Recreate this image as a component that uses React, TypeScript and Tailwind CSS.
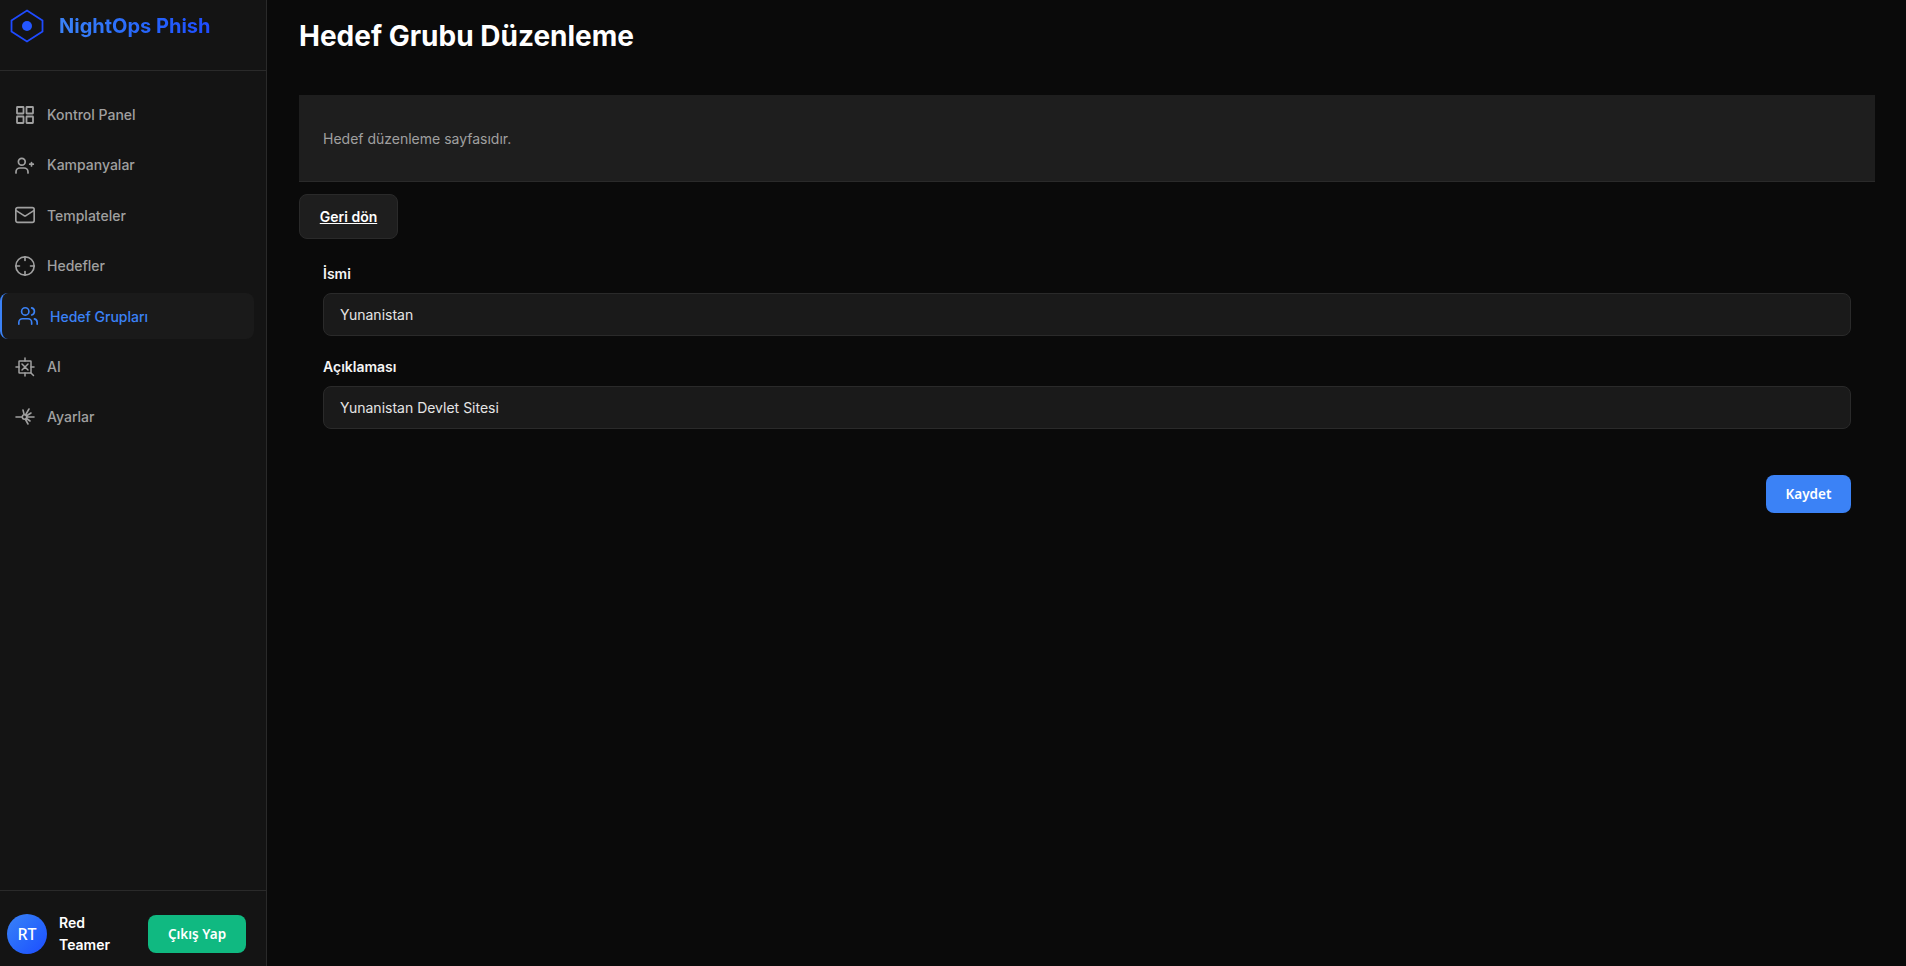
import React from "react";
import { Mail, Crosshair, Users } from "lucide-react";

const Grid = () => (
  <svg width="22" height="22" viewBox="0 0 22 22" fill="none" stroke="currentColor" strokeWidth="1.8">
    <rect x="3" y="3" width="6.5" height="6.5" rx="0.4" />
    <rect x="12.5" y="3" width="6.5" height="6.5" rx="0.4" />
    <rect x="3" y="12.5" width="6.5" height="6.5" rx="0.4" />
    <rect x="12.5" y="12.5" width="6.5" height="6.5" rx="0.4" />
  </svg>
);

const UserAdd = () => (
  <svg width="22" height="22" viewBox="0 0 22 22" fill="none" stroke="currentColor" strokeWidth="1.7" strokeLinecap="round" strokeLinejoin="round">
    <circle cx="7.8" cy="7.8" r="3.4" />
    <path d="M2 19v-1a4 4 0 0 1 4-4h4a4 4 0 0 1 4 4v1M17.5 8.5v3.5M15.7 10.2h3.6" />
  </svg>
);

const Chip = () => (
  <svg width="22" height="22" viewBox="0 0 22 22" fill="none" stroke="currentColor" strokeWidth="1.5" strokeLinecap="round" strokeLinejoin="round">
    <rect x="5" y="5" width="12" height="12" rx="0.5" />
    <path d="M8 8l6 6M14 8l-6 6M11 2v3M11 17v3M2 11h3M17 11h3M17 17l2.5 2.5" />
  </svg>
);

const Wrench = () => (
  <svg width="22" height="22" viewBox="0 0 22 22" fill="none" stroke="currentColor" strokeWidth="1.6" strokeLinecap="round" strokeLinejoin="round">
    <circle cx="10.5" cy="11" r="2.2" />
    <path d="M2 11h6M13 11h7M11.5 9L15 3M13 9.5L17 7M12.5 12.5L16 15M11.5 13.5L14 18M9 4l1 4" />
  </svg>
);

const items = [
  { label: "Kontrol Panel", icon: <Grid /> },
  { label: "Kampanyalar", icon: <UserAdd /> },
  { label: "Templateler", icon: <Mail size={22} strokeWidth={1.8} /> },
  { label: "Hedefler", icon: <Crosshair size={22} strokeWidth={1.8} /> },
  { label: "Hedef Grupları", icon: <Users size={22} strokeWidth={1.8} />, active: true },
  { label: "AI", icon: <Chip /> },
  { label: "Ayarlar", icon: <Wrench /> },
];

const Field = ({ label, value }: { label: string; value: string }) => (
  <div className="flex flex-col">
    <label className="text-[14px] leading-[20px] font-semibold text-[#f5f5f5] mb-[8.5px]">{label}</label>
    <div className="h-[43px] flex items-center px-[16px] bg-[#1a1a1a] border border-[#2a2a2a] rounded-[8px] text-[14px] text-[#e5e5e5]">{value}</div>
  </div>
);

export default function App() {
  return (
    <div className="flex h-[966px] w-full overflow-hidden bg-[#0a0a0a] text-white" style={{ fontFamily: "Inter, sans-serif" }}>
      <aside className="flex w-[267px] shrink-0 flex-col border-r border-[#2a2a2a] bg-[#141414]">
        <div className="flex h-[71px] shrink-0 items-start gap-[16px] border-b border-[#2a2a2a] pl-[10px] pt-[9px]">
          <svg width="34" height="34" viewBox="0 0 34 34" fill="none">
            <path d="M17 1.5L32.5 11.5V22.5L17 32.5L1.5 22.5V11.5Z" stroke="#1f4bff" strokeWidth="1.8" />
            <circle cx="17" cy="17" r="5" fill="#2456ff" />
          </svg>
          <span className="-ml-[1px] text-[20px] font-bold leading-[34px] text-transparent bg-clip-text bg-gradient-to-r from-[#3b82f6] to-[#1f4bff]">NightOps Phish</span>
        </div>
        <nav className="flex flex-1 flex-col gap-[4px] pt-[20.4px] pr-[12px]">
          {items.map((it) =>
            it.active ? (
              <div key={it.label} className="flex h-[46.4px] items-center gap-[11px] rounded-[8px] border-l-2 border-[#3b82f6] bg-[#1a1a1a] pl-[15px] text-[14px] font-medium text-[#3b82f6]">
                {it.icon}
                <span>{it.label}</span>
              </div>
            ) : (
              <div key={it.label} className="flex h-[46.4px] items-center gap-[11px] pl-[14px] text-[14px] font-medium text-[#a0a0a0]">
                {it.icon}
                <span>{it.label}</span>
              </div>
            )
          )}
        </nav>
        <div className="flex h-[76px] shrink-0 items-center border-t border-[#2a2a2a] pl-[7px] pt-[11px]">
          <div className="flex h-[40px] w-[40px] shrink-0 items-center justify-center rounded-full bg-gradient-to-br from-[#3b82f6] to-[#1f4bff] text-[16px] font-medium" style={{ fontFamily: "'Noto Sans', sans-serif" }}>RT</div>
          <div className="ml-[12px] w-[60px] text-[14px] font-semibold leading-[22px]">Red Teamer</div>
          <button className="ml-[29px] h-[38px] w-[98px] rounded-[8px] bg-[#10b981] text-[13.5px] font-semibold text-white" style={{ fontFamily: "'Noto Sans', sans-serif" }}>Çıkış Yap</button>
        </div>
      </aside>
      <main className="flex min-w-0 flex-1 flex-col pl-[32px] pr-[31px]">
        <h1 className="mt-[18px] text-[28px] font-bold leading-[36px] text-white">Hedef Grubu Düzenleme</h1>
        <div className="mt-[41px] flex h-[87px] items-center border-b border-[#2a2a2a] bg-[#1e1e1e] pl-[24px] text-[14px] text-[#a0a0a0]">Hedef düzenleme sayfasıdır.</div>
        <div className="mt-[12px]">
          <button className="h-[45px] w-[99px] rounded-[8px] border border-[#2a2a2a] bg-[#1e1e1e] text-[14px] font-semibold text-white underline">Geri dön</button>
        </div>
        <div className="flex flex-col gap-[21.5px] px-[24px] pt-[25px]">
          <Field label="İsmi" value="Yunanistan" />
          <Field label="Açıklaması" value="Yunanistan Devlet Sitesi" />
          <div className="mt-[25px] flex justify-end">
            <button className="h-[38px] w-[85px] rounded-[8px] bg-[#3b82f6] text-[13.5px] font-semibold text-white" style={{ fontFamily: "'Noto Sans', sans-serif" }}>Kaydet</button>
          </div>
        </div>
      </main>
    </div>
  );
}
